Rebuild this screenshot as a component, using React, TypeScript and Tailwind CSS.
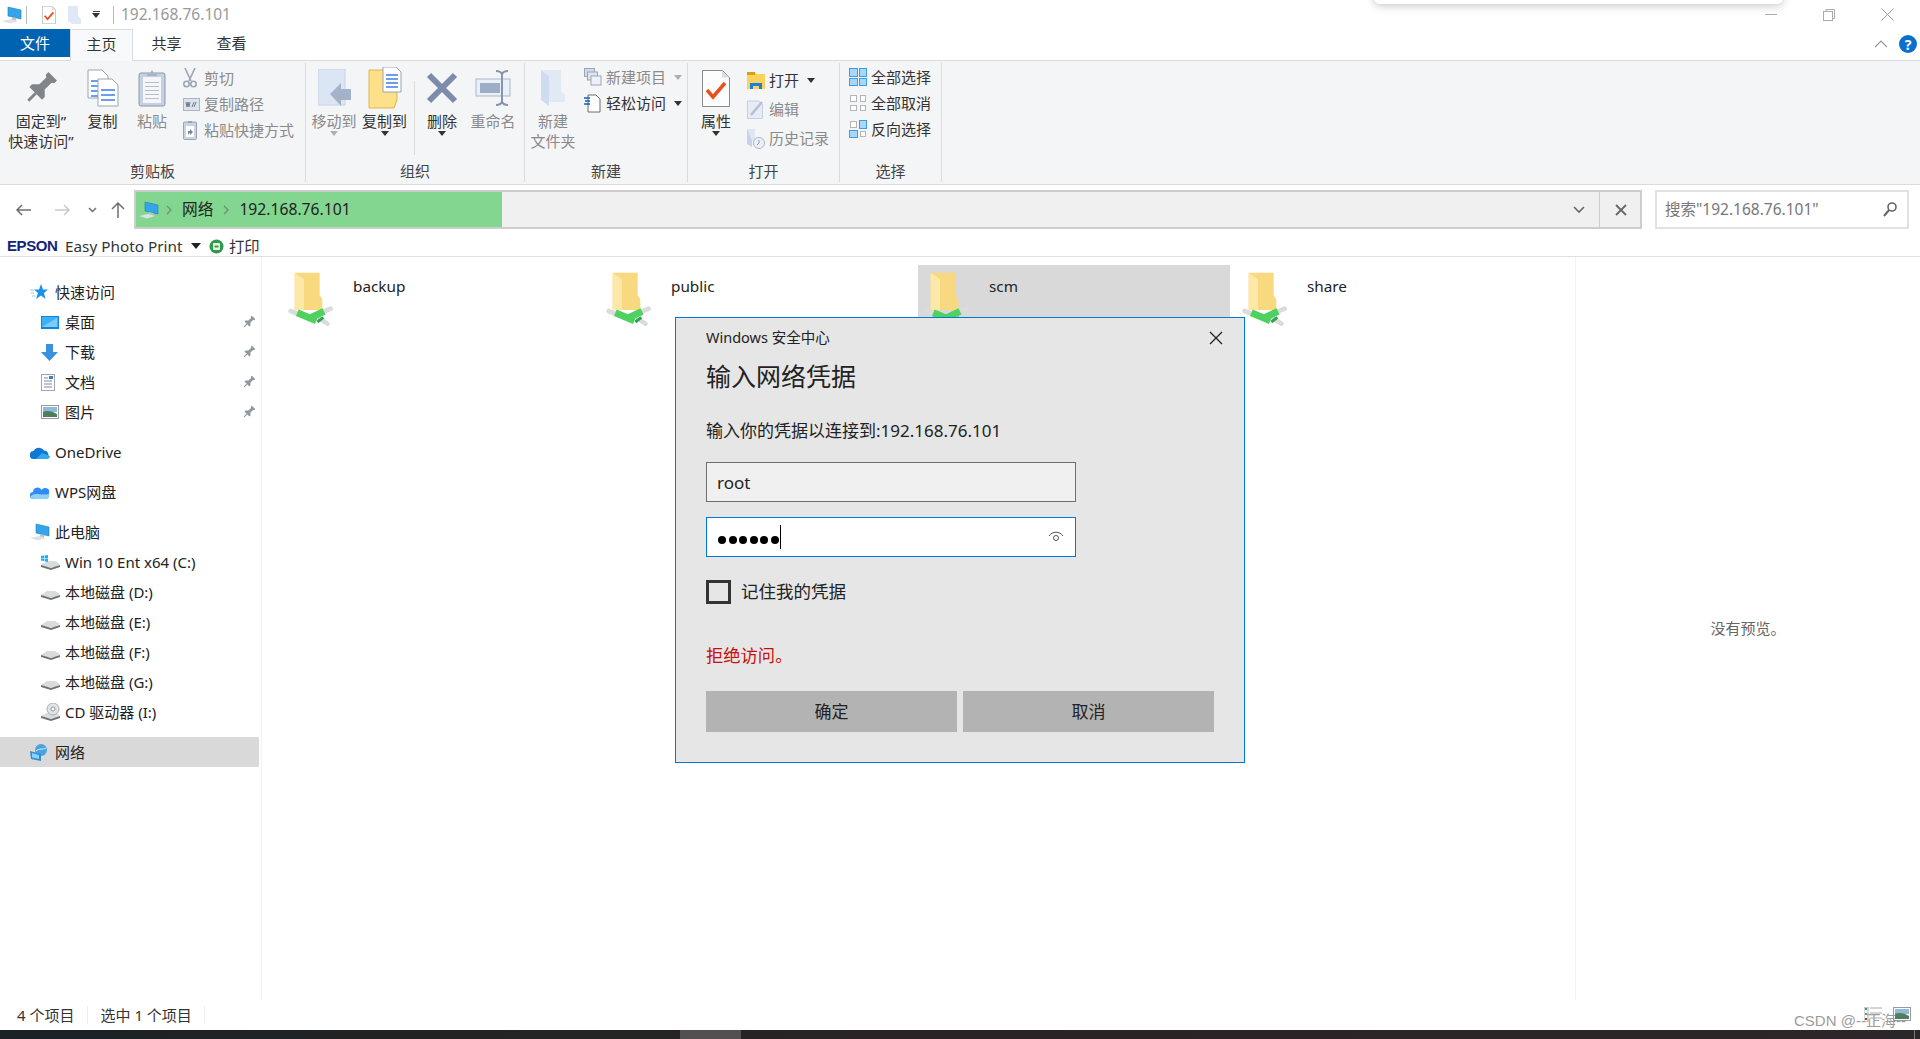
import { ReactNode } from "react";

const Caret = ({ color = "#444" }: { color?: string }) => (
  <svg width="8" height="5" viewBox="0 0 8 5"><path d="M0 0h8L4 5z" fill={color} /></svg>
);

const PinIcon = ({ size = 14, color = "#8f979f" }: { size?: number; color?: string }) => (
  <svg width={size} height={size} viewBox="0 0 24 24">
    <g transform="rotate(45 12 12)" fill={color}>
      <path d="M8 1h8v2.5l-1.5 1V11l3.5 3.5V17H6v-2.5L9.500 11V4.500L8 3.500z" />
      <rect x="11" y="17" width="2" height="7" />
    </g>
  </svg>
);

const PageLines = ({ x, y, w, h }: { x: number; y: number; w: number; h: number }) => (
  <g>
    <path d={`M${x} ${y}h${w - 6}l6 6v${h - 6}h-${w}z`} fill="#fff" stroke="#9aa5b1" />
    {[10, 15, 20, 25, 30].map((d) => d < h - 2 && <rect key={d} x={x + 3} y={y + d} width={w - 6} height="2" fill="#6d9eeb" />)}
  </g>
);

const CopyIcon = () => (
  <svg width="32" height="38" viewBox="0 0 32 38">
    <PageLines x={1} y={1} w={20} h={28} />
    <PageLines x={11} y={10} w={20} h={27} />
  </svg>
);

const PasteIcon = () => (
  <svg width="28" height="38" viewBox="0 0 28 38">
    <rect x="1" y="4" width="26" height="33" rx="2" fill="#c5d0e0" stroke="#8d99ac" />
    <rect x="5" y="8" width="18" height="26" fill="#f4f6f9" />
    {[13, 17, 21, 25, 29].map((d) => <rect key={d} x="7" y={d} width="14" height="1" fill="#b4bfcf" />)}
    <path d="M9 7V4h3l2-3 2 3h3v3z" fill="#a8b4c6" />
  </svg>
);

const ScissorsIcon = () => (
  <svg width="14" height="20" viewBox="0 0 14 20" fill="none" stroke="#9aa5b5" strokeWidth="1.600">
    <path d="M2 0l6 13M12 0L6 13" />
    <circle cx="3.500" cy="16" r="2.700" />
    <circle cx="10.500" cy="16" r="2.700" />
  </svg>
);

const CopyPathIcon = () => (
  <svg width="17" height="13" viewBox="0 0 17 13">
    <rect x=".5" y=".5" width="16" height="12" fill="#dbe3ee" stroke="#aab4c2" />
    <path d="M3 4l1 5 1-5 1 5 1-5M9 9l2-5M11 9l2-5" stroke="#6f7a89" fill="none" />
  </svg>
);

const PasteShortcutIcon = () => (
  <svg width="14" height="20" viewBox="0 0 14 20">
    <rect x=".5" y="2" width="13" height="17.500" rx="1" fill="#c9d3e2" stroke="#98a4b6" />
    <rect x="3" y="6" width="8" height="11" fill="#fff" />
    <path d="M5 15v-4h2V9l3 3-3 3v-2H6.500z" fill="#7a8698" />
    <path d="M5 3V1h4v2z" fill="#98a4b6" />
  </svg>
);

const MoveIcon = () => (
  <svg width="33" height="38" viewBox="0 0 33 38">
    <path d="M0 0h27v36H0z" fill="#dbe5f3" stroke="#c8d4e5" />
    <path d="M12 25l11-11v6h10v11H23v6z" fill="#a3b2c9" />
  </svg>
);

const CopyToIcon = () => (
  <svg width="34" height="42" viewBox="0 0 34 42">
    <path d="M1 3h28v30l-3 8H1z" fill="#fde08a" stroke="#e0b64a" />
    <path d="M15 0h13l5 5v20H15z" fill="#fff" stroke="#9aa5b1" />
    {[7, 11, 15, 19].map((d) => <rect key={d} x="18" y={d} width="12" height="2" fill="#6d9eeb" />)}
  </svg>
);

const DeleteIcon = () => (
  <svg width="32" height="32" viewBox="0 0 32 32"><path d="M3 3l26 26M29 3L3 29" stroke="#7d8cab" strokeWidth="6" /></svg>
);

const RenameIcon = () => (
  <svg width="36" height="36" viewBox="0 0 36 36">
    <rect x="1" y="9" width="34" height="17" fill="#eaf0f8" stroke="#a9b8cc" />
    <rect x="5" y="13" width="20" height="10" fill="#9eadc6" />
    <path d="M21 1c3 0 5 1 6 3 1-2 3-3 6-3M27 4v28M21 35c3 0 5-1 6-3 1 2 3 3 6 3" stroke="#8695ad" strokeWidth="2" fill="none" />
  </svg>
);

const NewFolderIcon = () => (
  <svg width="25" height="36" viewBox="0 0 25 36">
    <path d="M0 0l8 6v30L0 30z" fill="#cfdcef" />
    <path d="M0 0h20v21l4 4v7H8V6z" fill="#e1e9f5" />
  </svg>
);

const NewItemIcon = () => (
  <svg width="18" height="18" viewBox="0 0 18 18">
    <rect x=".5" y=".5" width="10" height="8" fill="#d3dbe6" stroke="#9aa5b5" />
    <rect x="3.500" y="4" width="10" height="8" fill="#dfe5ee" stroke="#9aa5b5" />
    <rect x="7" y="8" width="10" height="9" fill="#eef2f7" stroke="#9aa5b5" />
  </svg>
);

const EasyAccessIcon = () => (
  <svg width="17" height="19" viewBox="0 0 17 19">
    <path d="M4 1h8l4 4v13H4z" fill="#fff" stroke="#6c6c6c" />
    <path d="M0 4h6M1 7h5M0 10h6" stroke="#0b63b5" strokeWidth="1.300" />
  </svg>
);

const CheckDocIcon = ({ w, h }: { w: number; h: number }) => (
  <svg width={w} height={h} viewBox="0 0 28 37">
    <path d="M.5.500h20l7 7v29H.5z" fill="#fdfdfd" stroke="#8b8b8b" />
    <path d="M20 .5v7h7.500z" fill="#dcdcdc" />
    <path d="M5 20l6 7L23 13" fill="none" stroke="#e8501e" strokeWidth="3.500" />
  </svg>
);

const OpenIcon = () => (
  <svg width="18" height="17" viewBox="0 0 18 17">
    <path d="M0 0h8l2 2h8v15H0z" fill="#fbd25e" />
    <rect y="0" width="8" height="3" fill="#d9a011" />
    <path d="M3 17v-6h12v6h-3v-3H6v3z" fill="#1f7fd6" />
  </svg>
);

const EditIcon = () => (
  <svg width="17" height="19" viewBox="0 0 17 19">
    <path d="M.5 1h11l4 3v14.500H.5z" fill="#e7ecf4" stroke="#c4cfdf" />
    <path d="M4 15L15 2" stroke="#b3c0d4" strokeWidth="2.500" />
  </svg>
);

const HistoryIcon = () => (
  <svg width="18" height="20" viewBox="0 0 18 20">
    <path d="M0 0l5 3v15l-5-3z" fill="#c6d3e6" />
    <path d="M0 0h8v12H5z" fill="#dde6f2" />
    <circle cx="12" cy="14" r="5.500" fill="#edf1f7" stroke="#a9b5c6" />
    <path d="M12 11v3l-2 2" stroke="#8c99ac" fill="none" />
  </svg>
);

const SelectIcon = ({ cells }: { cells: boolean[] }) => (
  <div className="grid h-[18px] w-[18px] grid-cols-2 gap-[1px]">
    {cells.map((on, i) => (
      <div key={i} className={on ? "border border-[#3f9be8] bg-[#a9d6fb]" : "m-[1px] border border-[#b5b5b5] bg-white"} />
    ))}
  </div>
);

const PcIcon = ({ w = 20, h = 18 }: { w?: number; h?: number }) => (
  <svg width={w} height={h} viewBox="0 0 20 18">
    <path d="M6 1l13 3v9L6 10z" fill="#35a4e8" stroke="#1d7fc0" strokeWidth=".6" />
    <path d="M10 11l4 1v3l-4-1z" fill="#b9c2ca" />
    <path d="M0 15l9-2 7 2-8 2.500z" fill="#dde2e6" />
  </svg>
);

const NetworkFolder = () => (
  <svg width="45" height="55" viewBox="0 0 135 165">
    <path d="M20 2h75v68l8 12v32H20z" fill="#f8d97f" />
    <path d="M20 2l28 20v92H20z" fill="#fde8a8" />
    <path d="M8 117l32 13M128 110l-28 12M95 140l23 15" stroke="#d9dcdb" strokeWidth="14" strokeLinecap="round" fill="none" />
    <path d="M28 122l57 24M108 118l-38 18" stroke="#4fd15f" strokeWidth="21" fill="none" />
    <path d="M88 150l18-14" stroke="#2ea44f" strokeWidth="9" />
  </svg>
);

const LargeButton = ({ icon, lines, width, gray, arrow, iconBox = "h-[46px]" }: { icon: ReactNode; lines: string[]; width: string; gray?: boolean; arrow?: string; iconBox?: string }) => (
  <div className={`flex flex-col items-center ${width}`}>
    <div className={`flex items-center justify-center ${iconBox}`}>{icon}</div>
    <div className={`text-center leading-[20px] whitespace-nowrap ${gray ? "text-[#8a8a8a]" : "text-[#333]"}`}>
      {lines.map((l) => <div key={l}>{l}</div>)}
    </div>
    {arrow && <div className="-mt-[1px] flex h-[6px] items-center"><Caret color={arrow} /></div>}
  </div>
);

const SmallButton = ({ icon, label, gray, arrow, h = "h-[26px]", iw = "w-[22px]" }: { icon: ReactNode; label: string; gray?: boolean; arrow?: string; h?: string; iw?: string }) => (
  <div className={`flex items-center ${h}`}>
    <div className={`flex shrink-0 items-center ${iw}`}>{icon}</div>
    <span className={`whitespace-nowrap ${gray ? "text-[#8a8a8a]" : "text-[#333]"}`}>{label}</span>
    {arrow && <span className="ml-[8px] flex"><Caret color={arrow} /></span>}
  </div>
);

const RibbonGroup = ({ label, width, children }: { label: string; width: string; children: ReactNode }) => (
  <div className={`flex h-full shrink-0 flex-col border-r border-[#dcdcdc] ${width}`}>
    <div className="flex h-[98px] pt-[2px]">{children}</div>
    <div className="flex h-[20px] items-center justify-center text-[#444]">{label}</div>
  </div>
);

const Ribbon = () => (
  <div className="flex h-[124px] shrink-0 border-b border-[#dadbdc] bg-[#f4f5f7] pt-[2px] pb-[2px] text-[15px]">
    <RibbonGroup label="剪贴板" width="w-[306px]">
      <LargeButton width="w-[80px] ml-[1px]" icon={<PinIcon size={36} color="#80858c" />} lines={["固定到”", "快速访问”"]} />
      <LargeButton width="w-[43px]" icon={<CopyIcon />} lines={["复制"]} />
      <LargeButton width="w-[56px]" icon={<PasteIcon />} lines={["粘贴"]} gray />
      <div className="flex flex-col pl-[3px]">
        <SmallButton iw="w-[21px]" icon={<ScissorsIcon />} label="剪切" gray />
        <SmallButton iw="w-[21px]" icon={<CopyPathIcon />} label="复制路径" gray />
        <SmallButton iw="w-[21px]" icon={<PasteShortcutIcon />} label="粘贴快捷方式" gray />
      </div>
    </RibbonGroup>
    <RibbonGroup label="组织" width="w-[219px]">
      <LargeButton width="w-[56px]" icon={<MoveIcon />} lines={["移动到"]} gray arrow="#aab0b8" />
      <LargeButton width="w-[45px]" icon={<CopyToIcon />} lines={["复制到"]} arrow="#333" />
      <div className="mt-[16px] mr-[4px] ml-[7px] h-[74px] w-px bg-[#dcdcdc]" />
      <LargeButton width="w-[46px]" icon={<DeleteIcon />} lines={["删除"]} arrow="#333" />
      <LargeButton width="w-[52px] ml-[2px]" icon={<RenameIcon />} lines={["重命名"]} gray />
    </RibbonGroup>
    <RibbonGroup label="新建" width="w-[163px]">
      <LargeButton width="w-[56px]" icon={<NewFolderIcon />} lines={["新建", "文件夹"]} gray />
      <div className="-mt-[1px] flex flex-col pl-[3px]">
        <SmallButton icon={<NewItemIcon />} label="新建项目" gray arrow="#aab0b8" />
        <SmallButton icon={<EasyAccessIcon />} label="轻松访问" arrow="#333" />
      </div>
    </RibbonGroup>
    <RibbonGroup label="打开" width="w-[152px]">
      <LargeButton width="w-[56px]" icon={<CheckDocIcon w={28} h={37} />} lines={["属性"]} arrow="#333" />
      <div className="flex flex-col pl-[3px] pt-[1px]">
        <SmallButton icon={<OpenIcon />} label="打开" arrow="#333" h="h-[29px]" />
        <SmallButton icon={<EditIcon />} label="编辑" gray h="h-[29px]" />
        <SmallButton icon={<HistoryIcon />} label="历史记录" gray h="h-[29px]" />
      </div>
    </RibbonGroup>
    <RibbonGroup label="选择" width="w-[102px]">
      <div className="-mt-[1px] flex flex-col pl-[9px]">
        <SmallButton icon={<SelectIcon cells={[true, true, true, true]} />} label="全部选择" />
        <SmallButton icon={<SelectIcon cells={[false, false, false, false]} />} label="全部取消" />
        <SmallButton icon={<SelectIcon cells={[false, true, true, false]} />} label="反向选择" />
      </div>
    </RibbonGroup>
  </div>
);

const AddressRow = () => (
  <div className="flex h-[44px] shrink-0 items-end text-[15px]">
    <div className="relative flex h-[39px] w-[134px] shrink-0 items-center pl-[15px]">
      <svg width="116" height="18" viewBox="0 0 116 18" fill="none">
        <path d="M16 9H2M7 4L2 9l5 5" stroke="#6e6e6e" strokeWidth="1.500" />
        <path d="M40 9h14M49 4l5 5-5 5" stroke="#c9c9c9" strokeWidth="1.500" />
        <path d="M74 7l3.500 3.500L81 7" stroke="#6e6e6e" strokeWidth="1.500" />
        <path d="M103 17V3M97 8l6-6 6 6" stroke="#6e6e6e" strokeWidth="1.500" />
      </svg>
    </div>
    <div className="flex h-[39px] w-[1508px] shrink-0 border-2 border-[#cdcdcd] bg-[#f0f0f0]">
      <div className="flex w-[366px] items-center gap-[7px] bg-[#83d690] pl-[3px] text-[15.700px]">
        <PcIcon />
        <svg width="6" height="10" viewBox="0 0 6 10"><path d="M1 1l4 4-4 4" stroke="#6f8f75" fill="none" strokeWidth="1.300" /></svg>
        <span className="ml-[3px] text-[#222]">网络</span>
        <svg className="mx-[3px]" width="6" height="10" viewBox="0 0 6 10"><path d="M1 1l4 4-4 4" stroke="#6f8f75" fill="none" strokeWidth="1.300" /></svg>
        <span className="text-[#222]">192.168.76.101</span>
      </div>
      <div className="flex-1" />
      <div className="flex w-[40px] items-center justify-center">
        <svg width="12" height="8" viewBox="0 0 12 8"><path d="M1 1l5 5 5-5" stroke="#666" strokeWidth="1.600" fill="none" /></svg>
      </div>
      <div className="flex w-[41px] items-center justify-center border-l border-[#cdcdcd] pl-[2px]">
        <svg width="12" height="12" viewBox="0 0 12 12"><path d="M1 1l10 10M11 1L1 11" stroke="#666" strokeWidth="1.800" /></svg>
      </div>
    </div>
    <div className="ml-[13px] flex h-[39px] w-[254px] shrink-0 items-center justify-between border-2 border-[#e2e2e2] pr-[10px] pl-[8px] text-[15.500px] text-[#777]">
      <span>搜索"192.168.76.101"</span>
      <svg width="14" height="15" viewBox="0 0 14 15" fill="none" stroke="#666" strokeWidth="1.600"><circle cx="9" cy="5" r="4" /><path d="M6 8l-5 6" strokeWidth="2" /></svg>
    </div>
  </div>
);

const EpsonBar = () => (
  <div className="flex h-[28px] shrink-0 items-center border-b border-[#dfdfdf] pt-[7px] pl-[7px] text-[15.300px] text-[#333]">
    <span className="w-[58px] font-['Liberation_Sans',sans-serif] text-[15px] font-bold tracking-[-0.4px] text-[#14237a]">EPSON</span>
    <span className="w-[123px] whitespace-nowrap">Easy Photo Print</span>
    <span className="ml-[3px] flex w-[18px]"><svg width="10" height="6" viewBox="0 0 10 6"><path d="M0 0h10L5 6z" fill="#222" /></svg></span>
    <svg width="15" height="15" viewBox="0 0 15 15"><circle cx="7.500" cy="7.500" r="7" fill="#2f9a4a" /><rect x="4" y="4" width="7" height="7" rx="1" fill="#e9f6ec" /><rect x="5.500" y="6.500" width="4" height="2" fill="#2f9a4a" /></svg>
    <span className="ml-[5px]">打印</span>
  </div>
);

const StarIcon = () => (
  <svg width="18" height="16" viewBox="0 0 18 16">
    <path d="M11 0l2 5.500h5L14 9l1.500 6L11 11.500 6 15l2-6-4-3.500h5z" fill="#1c92e6" />
    <path d="M0 6h4M1 9h3M2 12h3" stroke="#8fcdf3" />
  </svg>
);
const DesktopIcon = () => (
  <svg width="18" height="13" viewBox="0 0 18 13"><rect width="18" height="13" fill="#0f86dc" /><rect x="1" y="1" width="16" height="10" fill="#3fb0f4" /><path d="M1 11l15-9v9z" fill="#7bcdfa" /></svg>
);
const DownloadIcon = () => (
  <svg width="17" height="17" viewBox="0 0 17 17"><path d="M5 0h7v8h5l-8.500 9L0 8h5z" fill="#3a91e0" /></svg>
);
const DocIcon = () => (
  <svg width="14" height="17" viewBox="0 0 14 17">
    <rect x=".5" y=".5" width="13" height="16" fill="#fff" stroke="#a7a7a7" />
    <path d="M3 4h4M3 7h8M3 10h8M3 13h8" stroke="#6e8db0" />
    <path d="M8 2h4v3H8z" fill="#2f86d0" />
  </svg>
);
const PictureIcon = () => (
  <svg width="18" height="14" viewBox="0 0 18 14"><rect x=".5" y=".5" width="17" height="13" fill="#fff" stroke="#9a9a9a" /><rect x="2" y="2" width="14" height="5" fill="#8fb9dd" /><path d="M2 7c4-2 9-1 14 2v3H2z" fill="#4f7e5b" /></svg>
);
const OneDriveIcon = () => (
  <svg width="20" height="13" viewBox="0 0 20 13"><path d="M4 13a4 4 0 0 1-.5-8A6 6 0 0 1 14 4.500 4.500 4.500 0 0 1 16 13z" fill="#0f78d4" /><path d="M6 13l6-6 8 3c0 2-1.500 3-3 3z" fill="#31a8ef" /></svg>
);
const WpsIcon = () => (
  <svg width="19" height="13" viewBox="0 0 19 13"><path d="M3.500 13A3.500 3.500 0 0 1 3 6a4.500 4.500 0 0 1 8.500-2A4 4 0 0 1 19 9a4 4 0 0 1-4 4z" fill="#2f8cf0" /><path d="M0 11c5-6 9-1 19-3v2c0 2-2 3-4 3H3z" fill="#8ed0fb" /></svg>
);
const DiskIcon = ({ win }: { win?: boolean }) => (
  <svg width="19" height="15" viewBox="0 0 19 15">
    <path d="M0 10l6-4h8l5 3-5 3.500H4z" fill="#d8dcdc" />
    <path d="M0 10l10 3 9-3v2l-9 3-10-3z" fill="#6f7274" />
    {win && <path d="M0 1l3-.5V3H0zM3.600.400L7 0v3H3.600zM0 3.600h3V6L0 5.600zM3.600 3.600H7V7L3.600 6.200z" fill="#17b0f0" />}
  </svg>
);
const CdIcon = () => (
  <svg width="19" height="18" viewBox="0 0 19 18">
    <path d="M0 13l6-3h8l5 2-5 3.500H4z" fill="#d8dcdc" />
    <path d="M0 13l10 3 9-3v2l-9 3-10-3z" fill="#6f7274" />
    <circle cx="12" cy="6" r="6" fill="#dfe3e6" stroke="#aab0b4" /><circle cx="12" cy="6" r="2" fill="#fff" stroke="#8f959a" />
  </svg>
);
const NetworkIcon = () => (
  <svg width="18" height="17" viewBox="0 0 18 17">
    <circle cx="11" cy="6" r="6" fill="#4aa3e0" />
    <path d="M6 7c3-3 7-1 10-3" stroke="#d5eefb" fill="none" />
    <path d="M0 7l11 3v7L1 15z" fill="#2a8fd4" />
    <path d="M2 9l7 2v4l-7-1.500z" fill="#8ed0fb" />
  </svg>
);

const SideRow = ({ icon, label, sub, pin, selected, mb }: { icon: ReactNode; label: string; sub?: boolean; pin?: boolean; selected?: boolean; mb?: string }) => (
  <div className={`flex h-[30px] w-[259px] items-center ${sub ? "pl-[41px]" : "pl-[30px]"} ${selected ? "bg-[#d9d9d9]" : ""} ${mb ?? ""}`}>
    <div className={`flex shrink-0 items-center ${sub ? "w-[24px]" : "w-[25px]"}`}>{icon}</div>
    <span className="whitespace-nowrap text-[#222]">{label}</span>
    {pin && <span className="mr-[3px] ml-auto flex"><PinIcon /></span>}
  </div>
);

const Sidebar = () => (
  <div className="h-full w-[262px] shrink-0 border-r border-[#f3f3f3] pt-[20px] text-[15px]">
    <SideRow icon={<StarIcon />} label="快速访问" />
    <SideRow sub pin icon={<DesktopIcon />} label="桌面" />
    <SideRow sub pin icon={<DownloadIcon />} label="下载" />
    <SideRow sub pin icon={<DocIcon />} label="文档" />
    <SideRow sub pin icon={<PictureIcon />} label="图片" mb="mb-[10px]" />
    <SideRow icon={<OneDriveIcon />} label="OneDrive" mb="mb-[10px]" />
    <SideRow icon={<WpsIcon />} label="WPS网盘" mb="mb-[10px]" />
    <SideRow icon={<PcIcon />} label="此电脑" />
    <SideRow sub icon={<DiskIcon win />} label="Win 10 Ent x64 (C:)" />
    <SideRow sub icon={<DiskIcon />} label="本地磁盘 (D:)" />
    <SideRow sub icon={<DiskIcon />} label="本地磁盘 (E:)" />
    <SideRow sub icon={<DiskIcon />} label="本地磁盘 (F:)" />
    <SideRow sub icon={<DiskIcon />} label="本地磁盘 (G:)" />
    <SideRow sub icon={<CdIcon />} label="CD 驱动器 (I:)" mb="mb-[10px]" />
    <SideRow selected icon={<NetworkIcon />} label="网络" />
  </div>
);

const FileTile = ({ name, selected }: { name: string; selected?: boolean }) => (
  <div className={`flex h-[65px] w-[312px] gap-[20px] pl-[6px] pt-[7px] ${selected ? "bg-[#d9d9d9]" : ""}`}>
    <NetworkFolder />
    <span className="pt-[4px] text-[15.300px] leading-[20px] text-[#222]">{name}</span>
  </div>
);

const Dialog = () => (
  <div className="absolute top-[317px] left-[675px] flex h-[446px] w-[570px] flex-col border border-[#0078d7] bg-[#e6e6e6] px-[30px] text-[17px] text-[#222]">
    <div className="flex h-[40px] shrink-0 items-center justify-between">
      <span className="-mt-[1px] text-[14.500px]">Windows 安全中心</span>
      <svg className="mr-[-9px]" width="14" height="14" viewBox="0 0 14 14"><path d="M1 1l12 12M13 1L1 13" stroke="#222" strokeWidth="1.300" /></svg>
    </div>
    <div className="flex h-[38px] shrink-0 items-center text-[25px] text-[#222]">输入网络凭据</div>
    <div className="mt-[23px] flex h-[24px] shrink-0 items-center">输入你的凭据以连接到:192.168.76.101</div>
    <div className="mt-[19px] flex h-[40px] w-[370px] shrink-0 items-center border border-[#6e6e6e] bg-[#f0f0f0] pt-[2px] pl-[10px]">root</div>
    <div className="mt-[15px] flex h-[40px] w-[370px] shrink-0 items-center border border-[#0078d7] bg-white pr-[11px] pl-[11px]">
      <div className="mt-[5px] flex gap-[2.600px]">
        {[0, 1, 2, 3, 4, 5].map((i) => <span key={i} className="h-[8px] w-[8px] rounded-full bg-black" />)}
      </div>
      <span className="ml-[1px] h-[24px] w-px bg-black" />
      <svg className="ml-auto" width="16" height="12" viewBox="0 0 16 12" fill="none" stroke="#555"><path d="M1 5c3-5 11-5 14 0" /><circle cx="8" cy="7" r="2.500" /></svg>
    </div>
    <div className="mt-[23px] flex h-[24px] shrink-0 items-center">
      <span className="h-[24px] w-[25px] border-[3px] border-[#333]" />
      <span className="ml-[10px] -mt-[1px] text-[17.500px]">记住我的凭据</span>
    </div>
    <div className="mt-[40px] flex h-[24px] shrink-0 items-center text-[17.300px] text-[#c50f0f]">拒绝访问。</div>
    <div className="mt-[23px] flex shrink-0 gap-[6px]">
      <div className="flex h-[41px] w-[251px] items-center justify-center bg-[#b3b3b3]">确定</div>
      <div className="flex h-[41px] w-[251px] items-center justify-center bg-[#b3b3b3]">取消</div>
    </div>
  </div>
);

export default function App() {
  return (
    <div className="relative flex h-[1039px] w-[1920px] flex-col overflow-hidden bg-white font-['Noto_Sans','Noto_Sans_CJK_SC',sans-serif]">
      {/* title bar */}
      <div className="flex h-[29px] shrink-0 items-center text-[15.500px] text-[#999]">
        <span className="ml-[2px] flex"><PcIcon /></span>
        <span className="ml-[4px] h-[18px] w-px bg-[#bbb]" />
        <span className="ml-[15px] flex"><CheckDocIcon w={14} h={18} /></span>
        <svg className="ml-[12px]" width="13" height="18" viewBox="0 0 13 18"><path d="M0 0h10v10l3 3v5H4l-4-3z" fill="#dfe8f4" /></svg>
        <span className="ml-[11px] flex flex-col items-center gap-[1px]"><span className="h-px w-[7px] bg-[#444]" /><Caret color="#333" /></span>
        <span className="ml-[13px] h-[18px] w-px bg-[#bbb]" />
        <span className="ml-[7px]">192.168.76.101</span>
      </div>
      {/* tabs */}
      <div className="flex h-[32px] shrink-0 border-b border-[#dadbdc] text-[15px] text-[#333]">
        <div className="flex h-[28px] w-[70px] items-center justify-center bg-[#0063b1] text-white">文件</div>
        <div className="flex h-[32px] w-[63px] items-center justify-center border-x border-t border-[#dadbdc] bg-[#f8f9fa] pb-[3px]">主页</div>
        <div className="flex h-[28px] w-[65px] items-center justify-center pt-[1px] pl-[2px]">共享</div>
        <div className="flex h-[28px] w-[65px] items-center justify-center pt-[1px] pl-[2px]">查看</div>
        <div className="ml-auto flex h-[30px] items-center gap-[11px] pr-[3px]">
          <svg width="14" height="8" viewBox="0 0 14 8"><path d="M1 7l6-6 6 6" stroke="#999" fill="none" strokeWidth="1.200" /></svg>
          <span className="flex h-[18px] w-[18px] items-center justify-center rounded-full bg-[#0b6fd0] text-[14px] font-bold text-white">?</span>
        </div>
      </div>
      <Ribbon />
      <AddressRow />
      <EpsonBar />
      {/* main */}
      <div className="flex h-[743px] shrink-0">
        <Sidebar />
        <div className="flex w-[1313px] shrink-0 pt-[8px] pl-[20px]">
          <FileTile name="backup" />
          <div className="w-[6px]" />
          <FileTile name="public" />
          <div className="w-[6px]" />
          <FileTile name="scm" selected />
          <div className="w-[6px]" />
          <FileTile name="share" />
        </div>
        <div className="flex flex-1 items-center justify-center border-l border-[#f3f3f3] text-[15px] text-[#666]">没有预览。</div>
      </div>
      {/* status */}
      <div className="flex h-[30px] shrink-0 items-center pl-[17px] text-[15px] text-[#333]">
        <span>4 个项目</span>
        <span className="ml-[13px] h-[18px] w-px bg-[#eee]" />
        <span className="ml-[12px]">选中 1 个项目</span>
        <span className="ml-[12px] h-[18px] w-px bg-[#eee]" />
      </div>
      {/* taskbar strip */}
      <div className="relative h-[9px] shrink-0 overflow-hidden bg-gradient-to-r from-[#1b2225] via-[#2a2324] to-[#2b2629]">
        <div className="ml-[680px] h-full w-[61px] bg-[#555050]" />
        <span className="absolute top-[5px] left-[1790px] text-[14px] font-semibold text-white">17:31</span>
        <span className="absolute top-0 left-[1914px] h-full w-px bg-[#777]" />
      </div>
      <Dialog />
      {/* notification peeking in at the top */}
      <div className="absolute top-[-10px] left-[1374px] h-[14px] w-[409px] rounded-b-[6px] bg-white shadow-[0_2px_8px_rgba(0,0,0,0.22)]" />
      {/* window controls */}
      <div className="absolute top-[8px] right-[26px] flex items-center gap-[46px]">
        <span className="h-px w-[12px] bg-[#aaa]" />
        <svg width="12" height="12" viewBox="0 0 12 12" fill="none" stroke="#aaa"><rect x=".5" y="2.500" width="9" height="9" /><path d="M3 2.500V.5h8.500v9H9.500" /></svg>
        <svg width="13" height="13" viewBox="0 0 13 13"><path d="M.5.5l12 12M12.500.5l-12 12" stroke="#999" /></svg>
      </div>
      {/* view toggles and watermark */}
      <div className="absolute top-[1007px] left-[1864px] flex items-start gap-[11px]">
        <svg width="18" height="15" viewBox="0 0 18 15"><path d="M0 0h4v15H0z" fill="#fff" stroke="#aaa" /><rect x="1" y="1" width="2" height="2" fill="#3b8ea5" /><rect x="1" y="6" width="2" height="2" fill="#5aa35a" /><rect x="1" y="11" width="2" height="2" fill="#b03030" /><path d="M6 1h12M6 6h12M6 11h12" stroke="#aaa" /></svg>
        <PictureIcon />
      </div>
      <span className="absolute top-[1012px] left-[1794px] font-['Liberation_Sans','Noto_Sans_CJK_SC',sans-serif] text-[15px] leading-[18px] text-[#9c9c9c]">CSDN @--正海--</span>
    </div>
  );
}
